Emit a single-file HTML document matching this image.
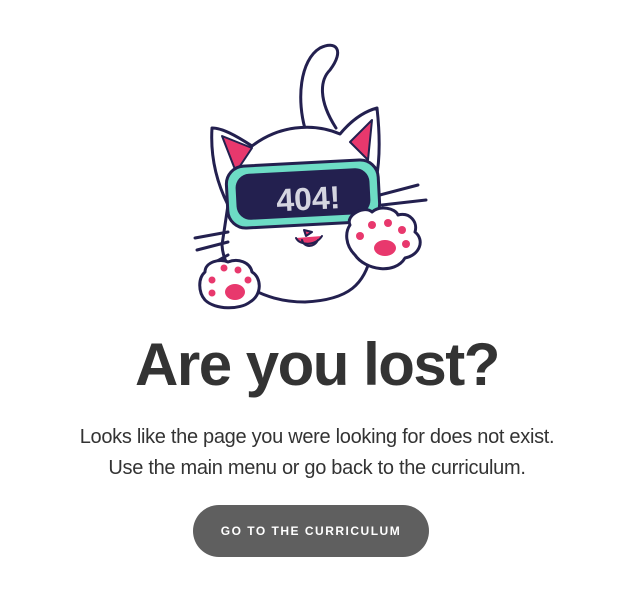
<!DOCTYPE html>
<html><head><style>
body{margin:0;width:634px;height:601px;background:#fff;font-family:"Liberation Sans",sans-serif;overflow:hidden;position:relative}
h1{position:absolute;left:0;width:634px;top:330px;margin:0;text-align:center;font-size:60px;font-weight:bold;color:#333;letter-spacing:-1.5px}
p{position:absolute;left:0;width:634px;margin:0;text-align:center;font-size:20px;color:#333;letter-spacing:-0.3px}
.btn{position:absolute;left:193px;top:505px;width:236px;height:52px;border-radius:26px;background:#5f5f5f;color:#fff;font-weight:bold;font-size:12px;letter-spacing:1.5px;text-align:center;line-height:52px}
</style></head><body>
<svg width="634" height="340" style="position:absolute;left:0;top:0" fill="none" stroke="#23204f" stroke-width="3" stroke-linecap="round" stroke-linejoin="round">
<path d="M306 132 C296 100 300 60 320 48 C336 40 345 50 330 70 C320 80 318 100 336 128" fill="#fff"/>
<path d="M252 146 C235 135 222 128 212 128 C210 160 218 185 228 205 L222 245 C224 280 262 302 305 302 C348 300 366 285 372 250 L376 180 C380 160 380 135 377 108 C362 112 350 122 340 134 C312 122 278 126 252 146Z" fill="#fff"/>
<path d="M222 136 L252 148 L236 172Z" fill="#e8386d" stroke-width="2"/>
<path d="M372 120 L368 160 L350 142Z" fill="#e8386d" stroke-width="2"/>
<rect x="227" y="163" width="152" height="62" rx="18" fill="#6ddcc5" transform="rotate(-3 303 194)"/>
<rect x="236" y="171" width="134" height="46" rx="14" fill="#23204f" stroke="none" transform="rotate(-3 303 194)"/>
<text x="308" y="210" text-anchor="middle" font-family="Liberation Sans" font-weight="bold" font-size="32" fill="#d5d5e0" stroke="none" transform="rotate(-3 303 194)">404!</text>
<path d="M304 230 L312 232 L306 236Z" fill="#e8386d" stroke-width="2"/>
<path d="M296 238 C300 246 316 246 322 236 M302 240 C304 248 314 248 318 240" fill="#e8386d" stroke-width="2"/>
<path d="M195 238 L228 232 M197 250 L228 242 M210 265 L228 255 M380 195 L418 185 M382 205 L426 200 M380 215 L410 218"/>
<path d="M350 225 C345 215 365 205 372 212 C380 205 395 208 398 215 C410 212 418 222 415 232 C425 240 420 255 405 258 C395 275 365 270 355 255 C345 245 345 232 350 225Z" fill="#fff"/>
<g fill="#e8386d" stroke="none"><circle cx="360" cy="236" r="4"/><circle cx="372" cy="225" r="4"/><circle cx="388" cy="223" r="4"/><circle cx="402" cy="230" r="4"/><circle cx="406" cy="244" r="4"/><ellipse cx="385" cy="248" rx="11" ry="8"/></g>
<path d="M205 272 C205 262 220 258 228 262 C238 258 250 262 252 272 C262 278 262 295 250 302 C240 310 215 310 205 300 C198 292 198 278 205 272Z" fill="#fff"/>
<g fill="#e8386d" stroke="none"><circle cx="212" cy="280" r="3.5"/><circle cx="224" cy="268" r="3.5"/><circle cx="238" cy="270" r="3.5"/><circle cx="248" cy="280" r="3.5"/><circle cx="212" cy="293" r="3.5"/><ellipse cx="235" cy="292" rx="10" ry="8"/></g>
</svg>
<h1>Are you lost?</h1>
<p style="top:426px">Looks like the page you were looking for does not exist.</p>
<p style="top:457px">Use the main menu or go back to the curriculum.</p>
<div class="btn">GO TO THE CURRICULUM</div>
</body></html>
